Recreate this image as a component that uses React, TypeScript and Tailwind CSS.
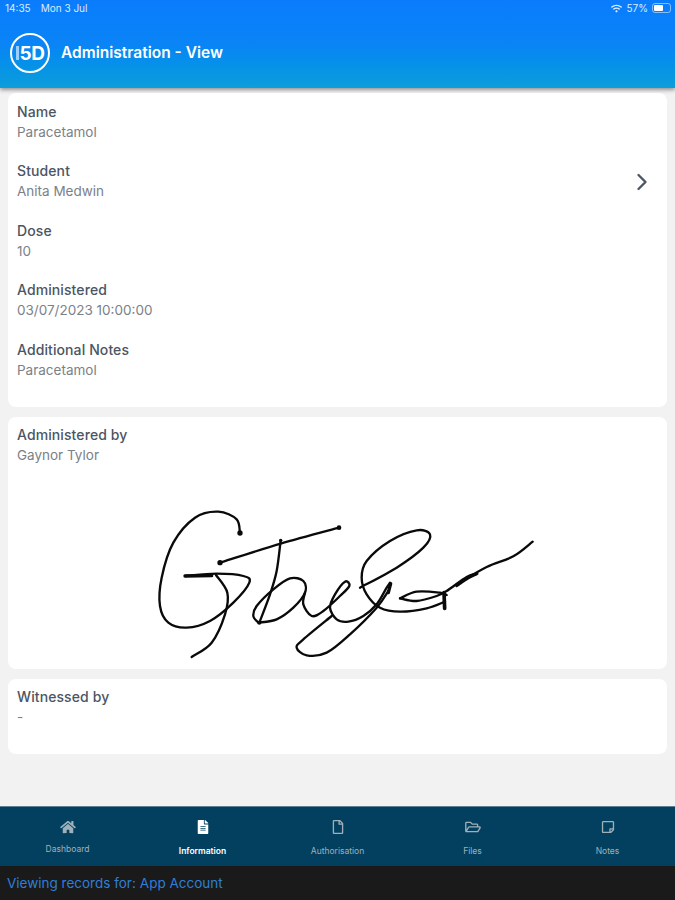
import { ChevronRight } from "lucide-react";
import { FaHome, FaFileAlt, FaRegFile, FaRegFolderOpen, FaRegStickyNote, FaWifi } from "react-icons/fa";

const DETAILS = [
  { label: "Name", value: "Paracetamol" },
  { label: "Student", value: "Anita Medwin" },
  { label: "Dose", value: "10" },
  { label: "Administered", value: "03/07/2023 10:00:00" },
  { label: "Additional Notes", value: "Paracetamol" },
];

const TABS = [
  { label: "Dashboard", icon: FaHome, labelClass: "mt-[9px] font-normal text-[#9fb0bb]" },
  { label: "Information", icon: FaFileAlt, active: true, labelClass: "mt-[11px] font-semibold text-white" },
  { label: "Authorisation", icon: FaRegFile, labelClass: "mt-[11px] font-normal text-[#9fb0bb]" },
  { label: "Files", icon: FaRegFolderOpen, labelClass: "mt-[11px] font-normal text-[#9fb0bb]" },
  { label: "Notes", icon: FaRegStickyNote, labelClass: "mt-[11px] font-normal text-[#9fb0bb]" },
];

// signature strokes, traced points
const STROKES: number[][][] = [
  // G
  [[300,128],[290,85],[235,62],[165,80],[100,155],[65,260],[60,345],[85,395],[140,410],[210,390],[280,335],[328,275],[310,255],[230,248],[135,255]],
  [[228,252],[262,305],[255,370],[215,455],[155,498]],
  // t bar and stem
  [[240,215],[422,158],[597,110]],
  [[422,148],[410,240],[390,310],[358,395]],
  // a
  [[355,395],[410,385],[460,350],[495,305],[490,270],[450,262],[400,295],[350,345],[340,375],[355,395]],
  // e
  [[495,305],[490,340],[515,375],[550,360],[600,315],[628,285],[615,272],[585,310],[570,350],[590,385],[625,392],[670,375],[710,340],[740,290],[750,275]],
  // g tail
  [[575,375],[490,445],[470,470],[500,493],[560,485],[630,430],[710,350],[745,300]],
  // l loop
  [[660,290],[770,230],[850,170],[870,130],[830,118],[750,150],[680,210],[665,260],[680,310],[720,350],[780,362],[860,352],[915,332]],
  // small loop
  [[780,322],[830,302],[900,305],[920,312]],
  [[780,322],[830,330],[890,315],[920,300],[980,258],[1012,248],[985,262],[950,285]],
  // flourish
  [[950,280],[1040,228],[1120,196],[1178,152]],
];

function smoothPath(pts: number[][]) {
  let d = `M${pts[0][0]} ${pts[0][1]}`;
  for (let i = 0; i < pts.length - 1; i++) {
    const p0 = pts[Math.max(i - 1, 0)];
    const p1 = pts[i];
    const p2 = pts[i + 1];
    const p3 = pts[Math.min(i + 2, pts.length - 1)];
    d += ` C${p1[0] + (p2[0] - p0[0]) / 6} ${p1[1] + (p2[1] - p0[1]) / 6} ${p2[0] - (p3[0] - p1[0]) / 6} ${p2[1] - (p3[1] - p1[1]) / 6} ${p2[0]} ${p2[1]}`;
  }
  return d;
}

function Field({ label, value }: { label: string; value: string }) {
  return (
    <div>
      <div className="text-[14px] leading-[21px] font-medium tracking-[0.1px] text-[#4b5563]">{label}</div>
      <div className="text-[13.5px] leading-[21px] text-[#7b8188]">{value}</div>
    </div>
  );
}

function Signature() {
  return (
    <svg
      viewBox="0 0 1230 540"
      className="ml-[123px] mt-[25px] h-[180px] w-[410px]"
      fill="none"
      stroke="#0a0a0a"
      strokeWidth="7"
      strokeLinecap="round"
      strokeLinejoin="round"
    >
      {STROKES.map((pts, i) => (
        <path key={i} d={smoothPath(pts)} />
      ))}
      {/* heavier pen marks */}
      <path strokeWidth="10" d="M135 255 L215 254" />
      <path strokeWidth="10" d="M752 278 L745 305" />
      <path strokeWidth="11" d="M912 305 L914 352" />
      <circle cx="300" cy="126" r="8" fill="#0a0a0a" stroke="none" />
      <circle cx="240" cy="215" r="8" fill="#0a0a0a" stroke="none" />
      <circle cx="597" cy="110" r="7" fill="#0a0a0a" stroke="none" />
      <circle cx="422" cy="148" r="5" fill="#0a0a0a" stroke="none" />
      <circle cx="358" cy="395" r="6" fill="#0a0a0a" stroke="none" />
    </svg>
  );
}

export default function App() {
  return (
    <div className="flex h-[900px] w-[675px] flex-col overflow-hidden bg-[#f2f2f2] font-['Inter','Liberation_Sans',sans-serif]">
      {/* Header */}
      <header className="h-[88px] shrink-0 bg-gradient-to-b from-[#0a7cfc] via-[#0a84f6] to-[#0e9ed9] text-white shadow-[0_2px_4px_rgba(0,0,0,0.4)]">
        <div className="flex h-[16px] items-center justify-between pl-[5px] pr-[4px] text-[10px] text-[#dcecff]">
          <div className="flex gap-[10px]">
            <span>14:35</span>
            <span>Mon 3 Jul</span>
          </div>
          <div className="flex items-center gap-[4px]">
            <FaWifi className="h-[11px] w-[11px]" />
            <span>57%</span>
            <div className="flex h-[10px] w-[19px] rounded-[3px] border border-white/50 p-[1px]">
              <div className="h-full w-[60%] rounded-[1px] bg-white" />
            </div>
          </div>
        </div>
        <div className="flex items-center gap-[11px] pl-[10px] pt-[17px]">
          <div className="flex h-[40px] w-[40px] items-center justify-center rounded-full border-2 border-white">
            <span className="mr-[1px] h-[14px] w-[3px] bg-white/60" />
            <span className="text-[19px] leading-none font-bold tracking-[-0.5px]">5D</span>
          </div>
          <h1 className="text-[15.5px] font-semibold">Administration - View</h1>
        </div>
      </header>

      {/* Content */}
      <main className="flex flex-1 flex-col px-[8px] pt-[5px]">
        <section className="relative h-[314px] rounded-[8px] bg-white px-[9px] pt-[7.5px]">
          <div className="flex flex-col gap-[17.5px]">
            {DETAILS.map((item) => (
              <Field key={item.label} label={item.label} value={item.value} />
            ))}
          </div>
          <ChevronRight className="absolute right-[11px] top-[75px] h-[28px] w-[28px] text-[#4b5563]" />
        </section>
        <section className="mt-[10px] h-[252px] rounded-[8px] bg-white px-[9px] pt-[7px]">
          <Field label="Administered by" value="Gaynor Tylor" />
          <Signature />
        </section>
        <section className="mt-[10px] h-[75px] rounded-[8px] bg-white px-[9px] pt-[7px]">
          <Field label="Witnessed by" value="-" />
        </section>
      </main>

      {/* Tabs */}
      <nav className="flex h-[60px] shrink-0 border-t border-[#5c7f92] bg-[#03405f]">
        {TABS.map((tab) => {
          const Icon = tab.icon;
          return (
            <div key={tab.label} className="flex flex-1 flex-col items-center pt-[13px]">
              <Icon className={`h-[14px] w-[16px] ${tab.active ? "text-white" : "text-[#9fb0bb]"}`} />
              <span className={`text-[8.5px] leading-[12px] ${tab.labelClass}`}>{tab.label}</span>
            </div>
          );
        })}
      </nav>
      <footer className="flex h-[34px] shrink-0 items-center gap-[4px] bg-[#1a1a1a] pl-[7px] text-[13.5px] text-[#2f7fd8]">
        <span>Viewing records for:</span>
        <span>App Account</span>
      </footer>
    </div>
  );
}
